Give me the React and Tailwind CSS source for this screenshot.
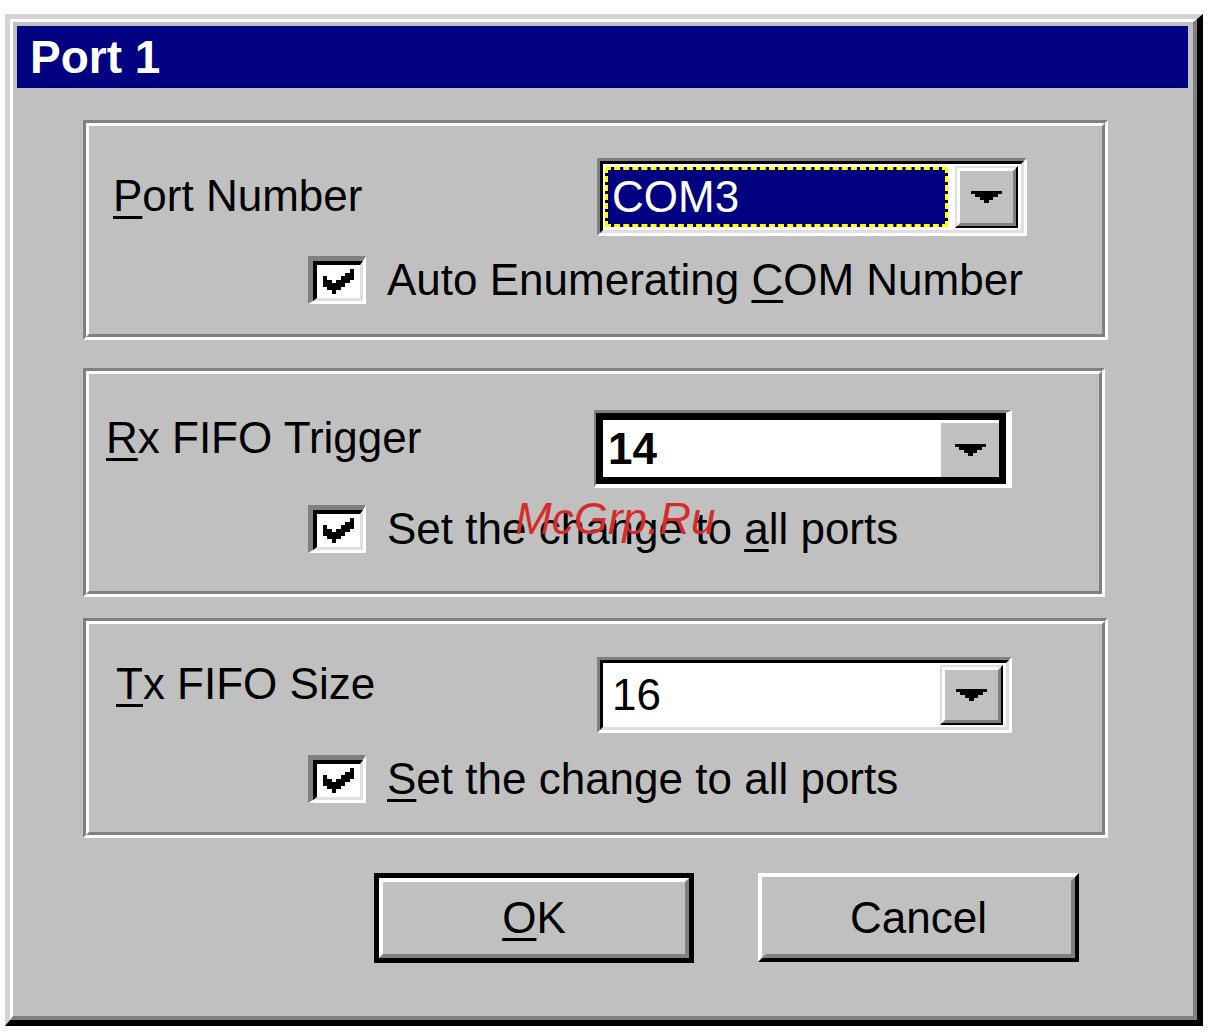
const FONT = "font-['Liberation_Sans',Arial,sans-serif]";

// Win95 style pixel glyphs, scaled
function Arrow() {
  return (
    <svg width="31" height="12" viewBox="0 0 7 4" preserveAspectRatio="none" shapeRendering="crispEdges">
      <path d="M0 0h7v1H0z M1 1h5v1H1z M2 2h3v1H2z M3 3h1v1H3z" fill="#000" />
    </svg>
  );
}

function CheckMark() {
  return (
    <svg width="31" height="25" viewBox="0 0 7 7" preserveAspectRatio="none" shapeRendering="crispEdges">
      <path
        d="M6 0h1v1H6z M5 1h2v1H5z M0 2h1v1H0z M4 2h3v1H4z M0 3h2v1H0z M3 3h3v1H3z M0 4h5v1H0z M1 5h3v1H1z M2 6h1v1H2z"
        fill="#000"
      />
    </svg>
  );
}

function Group({ className, children }) {
  return (
    <div
      className={`ml-[70px] border-[3px] border-t-[#808080] border-l-[#808080] border-b-white border-r-white ${className}`}
    >
      <div className="h-full border-[3px] border-t-white border-l-white border-b-[#808080] border-r-[#808080]">
        {children}
      </div>
    </div>
  );
}

function DropButton({ className }) {
  return (
    <div className={`border-[2px] border-t-[#dfdfdf] border-l-[#dfdfdf] border-b-black border-r-black ${className}`}>
      <div className="h-full border-[3px] border-t-white border-l-white border-b-[#808080] border-r-[#808080] bg-[#c0c0c0] flex items-center justify-center">
        <Arrow />
      </div>
    </div>
  );
}

function CheckRow({ className, children }) {
  return (
    <div className={`flex items-center ml-[219px] ${className}`}>
      <div className="w-[58px] h-[48px] border-t-[5px] border-l-[5px] border-[#808080] border-b-[3px] border-r-[3px] border-b-white border-r-white">
        <div className="h-full border-t-[4px] border-l-[4px] border-black border-b-[3px] border-r-[3px] border-b-[#dfdfdf] border-r-[#dfdfdf] bg-white flex items-center justify-center">
          <CheckMark />
        </div>
      </div>
      <div className="ml-[21px] text-[44px] leading-[44px] text-black">{children}</div>
    </div>
  );
}

const U = ({ children }) => (
  <span className="underline decoration-[3px] underline-offset-[5px]">{children}</span>
);

export default function App() {
  return (
    <div className={`relative w-[1216px] h-[1036px] bg-white pl-[5px] pt-[14px] ${FONT}`}>
      <div className="w-[1198px] h-[1012px] border-t-[5px] border-l-[5px] border-t-[#d4d4d4] border-l-[#d4d4d4] border-r-[6px] border-b-[6px] border-r-black border-b-black">
        <div className="h-full border-t-[3px] border-l-[3px] border-t-white border-l-white border-r-[4px] border-b-[4px] border-r-[#808080] border-b-[#808080] bg-[#c0c0c0] flex flex-col">
          {/* title bar */}
          <div className="ml-[4px] mt-[4px] w-[1171px] h-[62px] bg-[#000080] text-white font-bold text-[46px] leading-[46px] pl-[13px] flex items-center">
            Port 1
          </div>

          {/* port number */}
          <Group className="mt-[32px] w-[1025px] h-[220px]">
            <div className="flex items-start pt-[32px]">
              <div className="w-[508px] pl-[24px] mt-[16px] text-[44px] leading-[44px]">
                <U>P</U>ort Number
              </div>
              <div className="w-[430px] h-[78px] border-[3px] border-t-[#808080] border-l-[#808080] border-b-white border-r-white">
                <div className="h-full border-[3px] border-t-black border-l-black border-b-[#dfdfdf] border-r-[#dfdfdf] bg-white flex items-center">
                  <div className="ml-[2px] w-[343px] h-[60px] bg-black">
                    <div className="h-full border-[3px] border-dashed border-[#ffff00] bg-[#000080] bg-clip-padding text-white text-[44px] leading-[44px] pl-[4px] flex items-center">
                      COM3
                    </div>
                  </div>
                  <DropButton className="ml-auto mr-[3px] w-[63px] h-[62px]" />
                </div>
              </div>
            </div>
            <CheckRow className="mt-[20px]">
              Auto Enumerating <U>C</U>OM Number
            </CheckRow>
          </Group>

          {/* rx fifo */}
          <Group className="mt-[28px] w-[1022px] h-[229px]">
            <div className="flex items-start pt-[36px]">
              <div className="w-[505px] pl-[17px] mt-[6px] text-[44px] leading-[44px]">
                <U>R</U>x FIFO Trigger
              </div>
              <div className="w-[418px] h-[78px] border-t-[3px] border-l-[2px] border-t-[#808080] border-l-[#808080] border-b-[4px] border-r-[6px] border-b-white border-r-white">
                <div className="h-full border-[7px] border-black bg-white flex items-center">
                  <div className="flex-1 pl-[5px] text-[44px] leading-[44px] font-bold">14</div>
                  <div className="w-[61px] h-full border-t-[3px] border-l-[3px] border-white bg-[#c0c0c0] flex items-center justify-center">
                    <Arrow />
                  </div>
                </div>
              </div>
            </div>
            <CheckRow className="mt-[17px]">
              Set the change to <U>a</U>ll ports
            </CheckRow>
          </Group>

          {/* tx fifo */}
          <Group className="mt-[21px] w-[1025px] h-[220px]">
            <div className="flex items-start pt-[33px]">
              <div className="w-[508px] pl-[27px] mt-[5px] text-[44px] leading-[44px]">
                <U>T</U>x FIFO Size
              </div>
              <div className="w-[415px] h-[76px] border-[3px] border-t-[#808080] border-l-[#808080] border-b-white border-r-white">
                <div className="h-full border-[3px] border-t-black border-l-black border-b-[#dfdfdf] border-r-[#dfdfdf] bg-white flex items-center">
                  <div className="flex-1 pl-[9px] text-[44px] leading-[44px]">16</div>
                  <DropButton className="mr-[3px] w-[63px] h-[60px]" />
                </div>
              </div>
            </div>
            <CheckRow className="mt-[22px]">
              <U>S</U>et the change to all ports
            </CheckRow>
          </Group>

          {/* buttons */}
          <div className="flex mt-[35px] ml-[361px]">
            <div className="w-[320px] h-[90px] border-[5px] border-black">
              <div className="h-full border-[4px] border-t-white border-l-white border-b-[#808080] border-r-[#808080] flex items-center justify-center text-[44px] leading-[44px]">
                <span>
                  <U>O</U>K
                </span>
              </div>
            </div>
            <div className="ml-[64px] w-[321px] h-[89px] border-[4px] border-t-white border-l-white border-b-black border-r-black">
              <div className="h-full border-[4px] border-t-[#c0c0c0] border-l-[#c0c0c0] border-b-[#808080] border-r-[#808080] flex items-center justify-center text-[44px] leading-[44px]">
                Cancel
              </div>
            </div>
          </div>
        </div>
      </div>

      {/* watermark over the dialog */}
      <div className="absolute left-[515px] top-[497px] text-[44px] leading-[44px] italic text-[#d62b2b]">
        McGrp.Ru
      </div>
    </div>
  );
}
